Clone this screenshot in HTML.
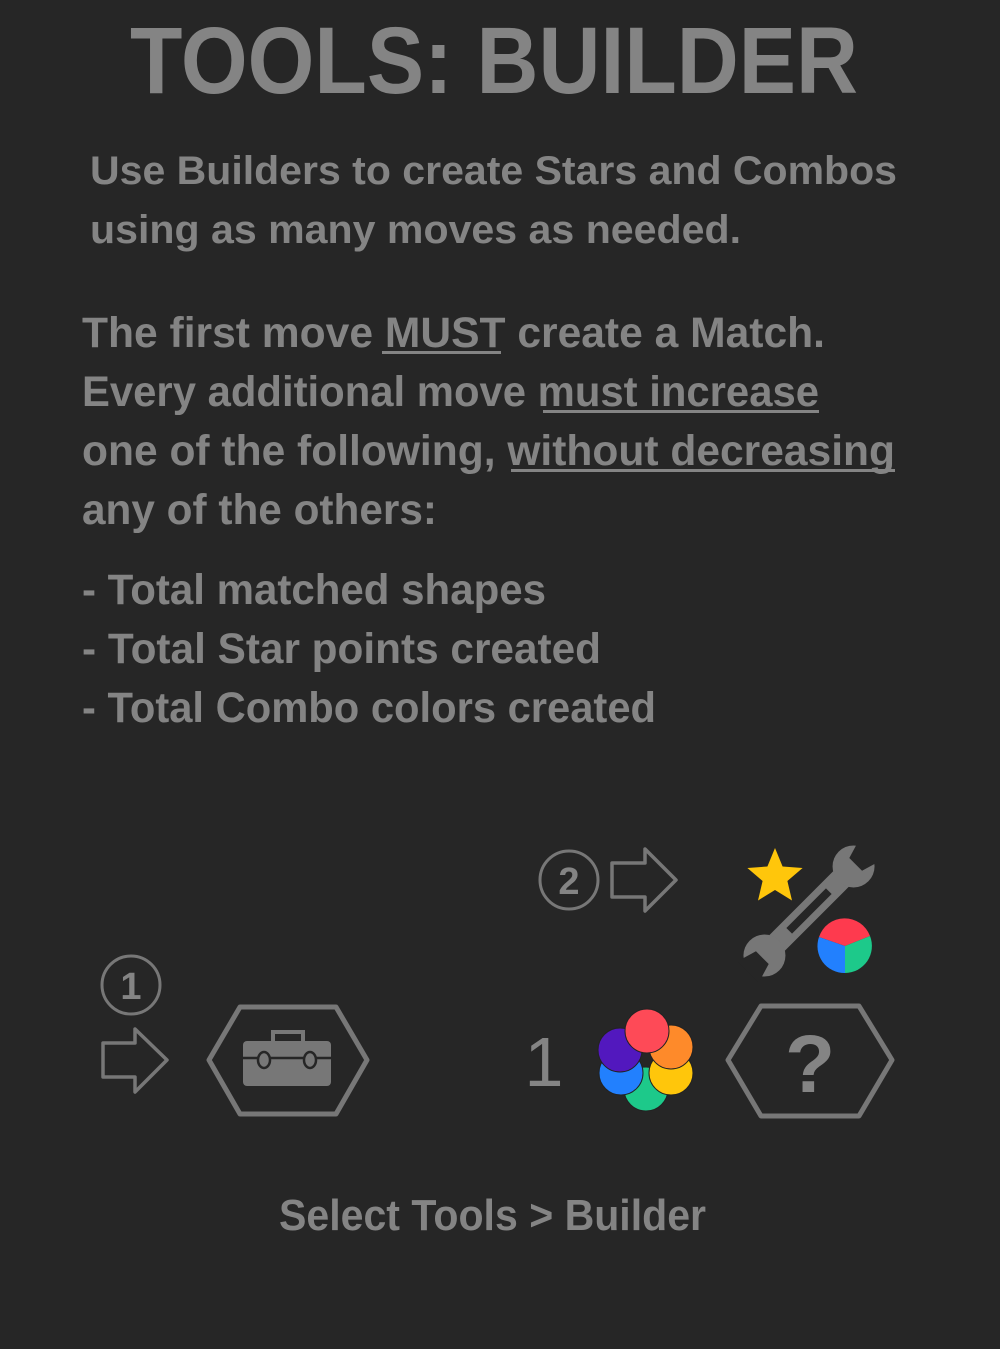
<!DOCTYPE html>
<html><head><meta charset="utf-8"><style>
html,body{margin:0;padding:0;background:#262626;}
svg{display:block;}
text{font-family:"Liberation Sans",sans-serif;font-weight:bold;fill:#848484;}
</style></head><body>
<svg width="1000" height="1349" viewBox="0 0 1000 1349" xmlns="http://www.w3.org/2000/svg">
<rect width="1000" height="1349" fill="#262626"/>
<text x="130" y="93" font-size="95" textLength="728" lengthAdjust="spacingAndGlyphs">TOOLS: BUILDER</text>
<text x="90" y="184" font-size="40" textLength="807" lengthAdjust="spacingAndGlyphs">Use Builders to create Stars and Combos</text>
<text x="90" y="243" font-size="40" textLength="651" lengthAdjust="spacingAndGlyphs">using as many moves as needed.</text>
<text x="82" y="347" font-size="43" textLength="743" lengthAdjust="spacingAndGlyphs">The first move MUST create a Match.</text>
<text x="82" y="406" font-size="43" textLength="737" lengthAdjust="spacingAndGlyphs">Every additional move must increase</text>
<text x="82" y="465" font-size="43" textLength="813" lengthAdjust="spacingAndGlyphs">one of the following, without decreasing</text>
<text x="82" y="524" font-size="43" textLength="355" lengthAdjust="spacingAndGlyphs">any of the others:</text>
<rect x="382" y="351" width="119" height="3" fill="#848484"/>
<rect x="543" y="410" width="276" height="3" fill="#848484"/>
<rect x="511" y="469" width="384" height="3" fill="#848484"/>
<text x="82" y="604" font-size="43" textLength="464" lengthAdjust="spacingAndGlyphs">- Total matched shapes</text>
<text x="82" y="663" font-size="43" textLength="519" lengthAdjust="spacingAndGlyphs">- Total Star points created</text>
<text x="82" y="722" font-size="43" textLength="574" lengthAdjust="spacingAndGlyphs">- Total Combo colors created</text>
<text x="279" y="1230" font-size="44" textLength="427" lengthAdjust="spacingAndGlyphs">Select Tools &gt; Builder</text>

<!-- step 2 -->
<circle cx="569" cy="880" r="29" fill="none" stroke="#777" stroke-width="3"/>
<text x="569" y="894" font-size="38" text-anchor="middle" fill="#777">2</text>
<path d="M612,863 H645 V849 L676,880 L645,911 V897 H612 Z" fill="none" stroke="#777" stroke-width="3.5" stroke-linejoin="round"/>
<!-- star -->
<polygon fill="#FFC60B" points="775,848 782.6,866.5 802.6,868 787.4,881 792,900.5 775,890 758,900.5 762.6,881 747.4,868 767.4,866.5"/>
<!-- wrench -->
<g transform="translate(809,911) rotate(-45)" fill="#777">
<rect x="-50" y="-11" width="100" height="22"/>
<circle cx="63" cy="0" r="21"/>
<circle cx="-63" cy="0" r="21"/>
<path d="M66,-9 L86,-15 V15 L66,9 Z" fill="#262626"/>
<path d="M-66,-9 L-86,-15 V15 L-66,9 Z" fill="#262626"/>
<rect x="-28" y="-4" width="56" height="8" fill="#262626"/>
</g>
<!-- pie -->
<path d="M845,946 L819,937 A27,27 0 0 1 870,936 Z" fill="#FE3A4E"/>
<path d="M845,946 L819,937 A27,27 0 0 0 845,973 Z" fill="#2280FE"/>
<path d="M845,946 L870,936 A27,27 0 0 1 845,973 Z" fill="#1DC98A"/>

<!-- step 1 -->
<circle cx="131" cy="985" r="29" fill="none" stroke="#777" stroke-width="3"/>
<text x="131" y="999" font-size="38" text-anchor="middle" fill="#777">1</text>
<path d="M103,1043 H135 V1029 L167,1060 L135,1092 V1077 H103 Z" fill="none" stroke="#777" stroke-width="3.5" stroke-linejoin="round"/>
<polygon points="209,1060 240,1007 336,1007 367,1060 336,1114 240,1114" fill="none" stroke="#777" stroke-width="5" stroke-linejoin="round"/>
<rect x="243" y="1041" width="88" height="45" rx="4" fill="#777"/>
<path d="M273,1041 V1032 H303 V1041" fill="none" stroke="#777" stroke-width="4"/>
<line x1="243" y1="1058" x2="331" y2="1058" stroke="#262626" stroke-width="2.5"/>
<ellipse cx="264" cy="1060" rx="6" ry="8" fill="#777" stroke="#262626" stroke-width="2.5"/>
<ellipse cx="310" cy="1060" rx="6" ry="8" fill="#777" stroke="#262626" stroke-width="2.5"/>

<text x="544" y="1086" font-size="70" text-anchor="middle" fill="#777" style="font-weight:normal">1</text>
<!-- flower -->
<g stroke="#222" stroke-width="1">
<circle cx="646" cy="1089" r="22" fill="#1DC98A"/>
<circle cx="671" cy="1073" r="22" fill="#FFC60B"/>
<circle cx="671" cy="1047" r="22" fill="#FE8A2A"/>
<circle cx="621" cy="1073" r="22" fill="#2280FE"/>
<circle cx="620" cy="1050" r="22" fill="#5218BE"/>
<circle cx="647" cy="1031" r="22" fill="#FE4A57"/>
</g>
<polygon points="728,1060 761,1006 859,1006 892,1060 859,1116 761,1116" fill="none" stroke="#777" stroke-width="5" stroke-linejoin="round"/>
<text x="810" y="1092" font-size="82" text-anchor="middle" fill="#777">?</text>
</svg>
</body></html>
